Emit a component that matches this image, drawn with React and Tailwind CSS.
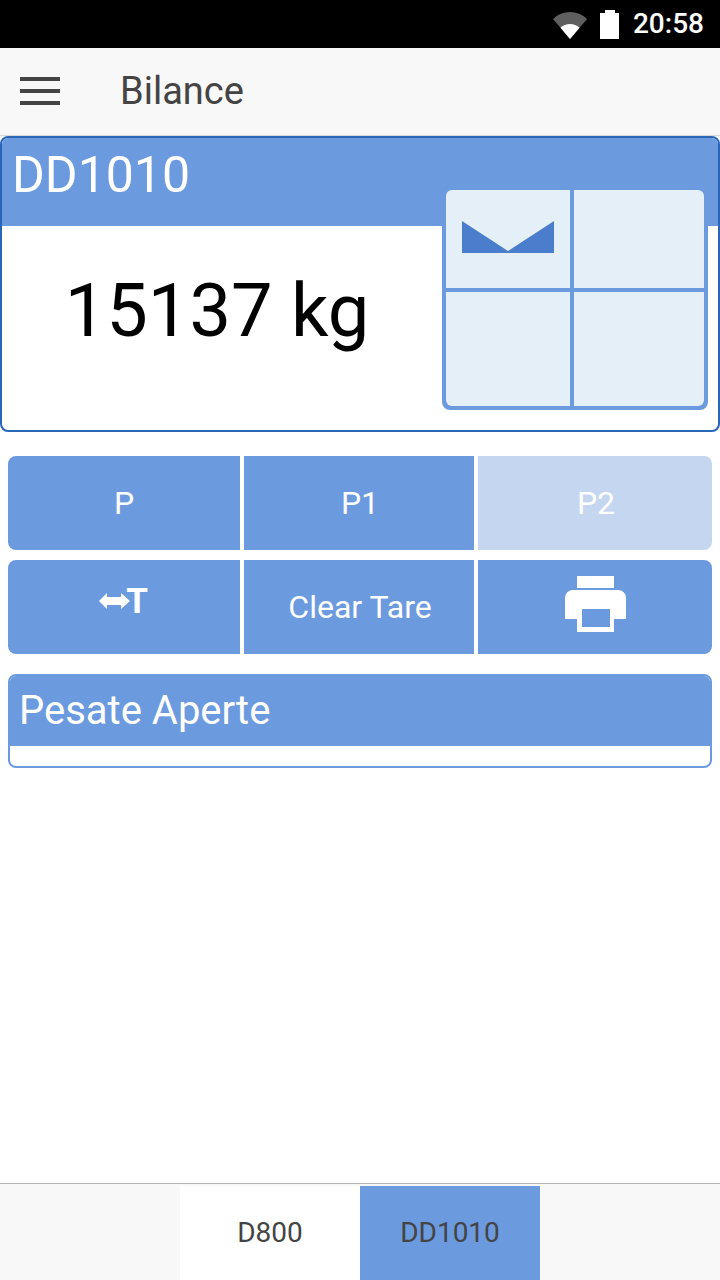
import React from 'react';

const StatusBar = () => (
  <div className="h-12 bg-black flex items-center justify-end text-white">
    <svg width="34" height="28" viewBox="0 0 34 28" className="mt-[1px]">
      <path d="M0 8 A24 24 0 0 1 34 8 L17 28 Z" fill="#5f5f5f" />
      <path d="M7.5 16.8 A14 14 0 0 1 26.5 16.8 L17 28 Z" fill="#fff" />
    </svg>
    <svg width="19" height="29" viewBox="0 0 19 29" className="ml-[13px] mt-[1px]">
      <path d="M5 0 H15 V3 H19 V29 H0 V3 H5 Z" fill="#fff" />
    </svg>
    <span className="ml-[14px] mr-4 text-[28px] leading-none font-medium">20:58</span>
  </div>
);

const Toolbar = () => (
  <div className="h-[88px] bg-[#f8f8f8] border-b border-[#d8d8d8] flex items-center pl-5">
    <div className="w-10 flex flex-col gap-2 -mt-[1px]">
      <div className="h-1 bg-[#444444]" />
      <div className="h-1 bg-[#444444]" />
      <div className="h-1 bg-[#444444]" />
    </div>
    <span className="ml-[60px] -mt-[2px] text-[38px] leading-none text-[#444444]">Bilance</span>
  </div>
);

const ScaleCard = () => (
  <div className="relative h-[296px] border-2 border-[#2a66b8] rounded-lg overflow-hidden bg-white">
    <div className="h-[88px] bg-[#6c9ade] pl-[10px] pt-[12px] text-[50px] leading-[50px] text-white">DD1010</div>
    <div className="w-[430px] pt-[43px] text-center text-[74px] leading-[84px] text-black">15137 kg</div>
    {/* light grid that overlaps the blue header */}
    <div className="absolute left-[440px] top-[48px] w-[266px] h-[224px] bg-[#6c9ade] rounded-lg p-1 grid grid-cols-[124px_130px] grid-rows-[98px_114px] gap-1">
      <div className="bg-[#e5eff8] rounded-tl-md flex items-start pl-4 pt-[31px]">
        <svg width="92" height="32" viewBox="0 0 92 32">
          <path d="M0 0 L46 30 L92 0 V32 H0 Z" fill="#4a7dcc" />
        </svg>
      </div>
      <div className="bg-[#e5eff8] rounded-tr-md" />
      <div className="bg-[#e5eff8] rounded-bl-md" />
      <div className="bg-[#e5eff8] rounded-br-md" />
    </div>
  </div>
);

const Btn = ({ className, children }) => (
  <div className={`flex items-center justify-center h-[94px] text-[32px] text-white ${className}`}>{children}</div>
);

const PrinterIcon = () => (
  <svg width="62" height="56" viewBox="0 0 62 56" className="-mt-[6px] ml-[2px]">
    <path d="M12 0 H49 V12 H12 Z" fill="#fff" />
    <path fillRule="evenodd" d="M8 14 H53 A8 8 0 0 1 61 22 V43 H49 V56 H12 V43 H0 V22 A8 8 0 0 1 8 14 Z M17 33 V51 H45 V33 Z" fill="#fff" />
  </svg>
);

const TareIcon = () => (
  <div className="flex items-start -mt-[10px] -ml-[1px]">
    <svg width="31" height="16" viewBox="0 0 31 16" className="mt-[4px]">
      <path d="M0 8 L8 0 V4 H22 V0 L31 8 L22 16 V12 H8 V16 Z" fill="#fff" />
    </svg>
    <span className="-ml-[4px] text-[35px] leading-[26px] font-bold">T</span>
  </div>
);

const Buttons = () => (
  <div className="mt-6 px-2 flex flex-col gap-[10px]">
    <div className="grid grid-cols-[232px_230px_234px] gap-1">
      <Btn className="bg-[#6c9ade] rounded-l-lg">P</Btn>
      <Btn className="bg-[#6c9ade] pl-[2px]">P1</Btn>
      <Btn className="bg-[#c4d6f0] rounded-r-lg pl-[2px]">P2</Btn>
    </div>
    <div className="grid grid-cols-[232px_230px_234px] gap-1">
      <Btn className="bg-[#6c9ade] rounded-l-lg"><TareIcon /></Btn>
      <Btn className="bg-[#6c9ade] pl-[2px]">Clear Tare</Btn>
      <Btn className="bg-[#6c9ade] rounded-r-lg"><PrinterIcon /></Btn>
    </div>
  </div>
);

const OpenWeighs = () => (
  <div className="mt-5 mx-2 h-[94px] border-2 border-[#6c9ade] rounded-lg overflow-hidden">
    <div className="h-[70px] bg-[#6c9ade] pl-[9px] flex items-center text-[40px] leading-none text-white">Pesate Aperte</div>
  </div>
);

const BottomTabs = () => (
  <div className="h-[97px] bg-[#f8f8f8] border-t border-[#b4b4b4] flex justify-center pt-[2px]">
    <div className="w-[180px] bg-white flex items-center justify-center text-[28px] text-[#444444]">D800</div>
    <div className="w-[180px] bg-[#6c9ade] flex items-center justify-center text-[28px] text-[#444444]">DD1010</div>
  </div>
);

export default function App() {
  return (
    <div className="w-[720px] h-[1280px] bg-white flex flex-col font-['Roboto',sans-serif]">
      <StatusBar />
      <Toolbar />
      <ScaleCard />
      <Buttons />
      <OpenWeighs />
      <div className="flex-1" />
      <BottomTabs />
    </div>
  );
}
